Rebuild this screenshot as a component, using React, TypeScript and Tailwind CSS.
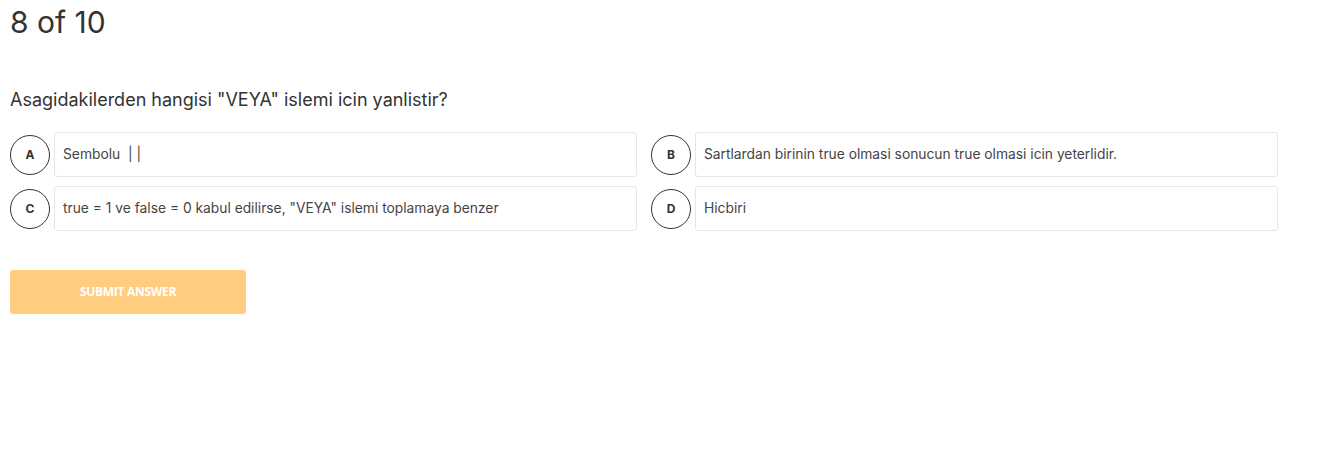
import React from 'react';

const options = [
  { key: 'A', text: 'Sembolu  | |' },
  { key: 'B', text: 'Sartlardan birinin true olmasi sonucun true olmasi icin yeterlidir.' },
  { key: 'C', text: 'true = 1 ve false = 0 kabul edilirse, "VEYA" islemi toplamaya benzer' },
  { key: 'D', text: 'Hicbiri' },
];

const OptionRow = ({ letter, text }: { letter: string; text: string }) => (
  <div className="flex items-center gap-[4px]">
    <div className="w-[40px] h-[40px] shrink-0 rounded-full border border-[#333] flex items-center justify-center text-[12px] font-bold text-[#333]">
      {letter}
    </div>
    <div className="flex-1 h-[45px] flex items-center px-[8px] border border-[#e6e6e6] rounded-[3px] text-[13.8px] text-[#444] whitespace-pre">
      {text}
    </div>
  </div>
);

export default function App() {
  return (
    <div className="w-[1322px] h-[450px] bg-white pl-[10px] pt-[1px] font-['Inter',sans-serif]">
      <h1 className="text-[30px] leading-[42px] text-[#333]">8 of 10</h1>

      <p className="mt-[45px] text-[18px] leading-[24px] text-[#333]">
        Asagidakilerden hangisi "VEYA" islemi icin yanlistir?
      </p>

      <div className="mt-[20px] w-[1268px] grid grid-cols-2 gap-x-[14px] gap-y-[9px]">
        {options.map((o) => (
          <OptionRow key={o.key} letter={o.key} text={o.text} />
        ))}
      </div>

      <button className="mt-[39px] w-[236px] h-[44px] rounded-[3px] bg-[#ffcc80] text-white text-[12px] font-bold tracking-tight font-['Open_Sans',sans-serif]">
        SUBMIT ANSWER
      </button>
    </div>
  );
}
